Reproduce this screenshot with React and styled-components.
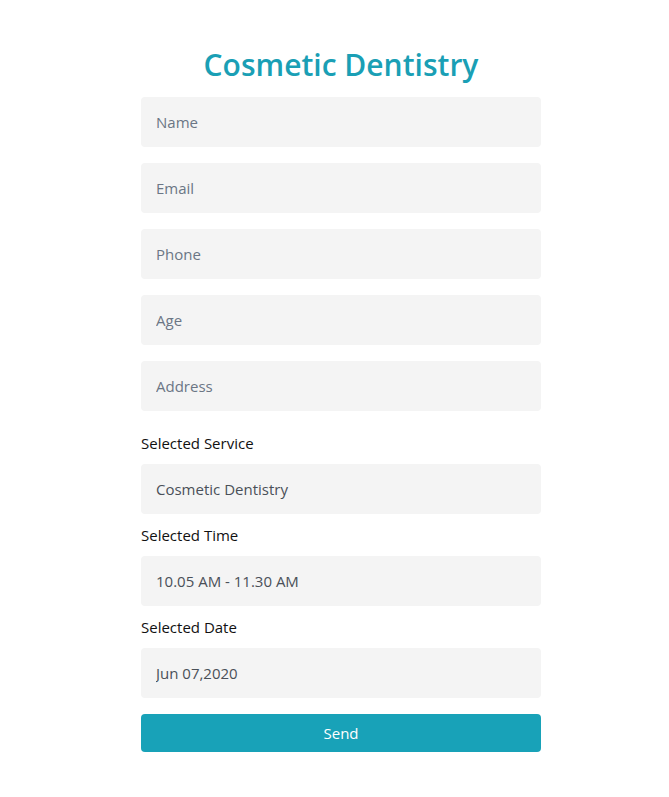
import styled, { createGlobalStyle } from 'styled-components'

const GlobalStyle = createGlobalStyle`
  body {
    margin: 0;
    background: #fff;
    font-family: 'Open Sans', 'Noto Sans', sans-serif;
  }
`

const fields = ['Name', 'Email', 'Phone', 'Age', 'Address']

const selected = [
  { label: 'Selected Service', value: 'Cosmetic Dentistry' },
  { label: 'Selected Time', value: '10.05 AM - 11.30 AM' },
  { label: 'Selected Date', value: 'Jun 07,2020' },
]

const App = () => {
  return (
    <Page>
      <GlobalStyle />
      <Form onSubmit={(e) => e.preventDefault()}>
        <Title>Cosmetic Dentistry</Title>
        {fields.map((f) => (
          <Input key={f} placeholder={f} />
        ))}
        {selected.map((s, idx) => (
          <Group key={s.label} $first={idx === 0}>
            <Label>{s.label}</Label>
            <Input defaultValue={s.value} readOnly />
          </Group>
        ))}
        <Button type="submit">Send</Button>
      </Form>
    </Page>
  )
}

export default App

const Page = styled.div`
  display: flex;
  justify-content: center;
  padding-top: 43px;
`

const Form = styled.form`
  display: flex;
  flex-direction: column;
  gap: 16px;
  width: 400px;
  margin-left: 13px;
`

const Title = styled.h1`
  margin: 0 0 -5px;
  text-align: center;
  font-size: 30px;
  line-height: 43px;
  font-weight: 600;
  color: #1a9fb5;
`

const Input = styled.input`
  box-sizing: border-box;
  width: 100%;
  height: 50px;
  padding: 0 15px;
  border: none;
  border-radius: 4px;
  background: #f4f4f4;
  font-family: inherit;
  font-size: 15px;
  color: #4a5058;
  outline: none;

  &::placeholder {
    color: #6b7685;
  }
`

const Group = styled.div`
  display: flex;
  flex-direction: column;
  margin-top: ${(p) => (p.$first ? '4px' : '-7px')};
`

const Label = styled.label`
  margin: 0 0 9px;
  font-size: 15px;
  line-height: 24px;
  color: #111;
`

const Button = styled.button`
  height: 38px;
  border: none;
  border-radius: 4px;
  background: #18a2b8;
  color: #fff;
  font-family: inherit;
  font-size: 15px;
  cursor: pointer;
`
